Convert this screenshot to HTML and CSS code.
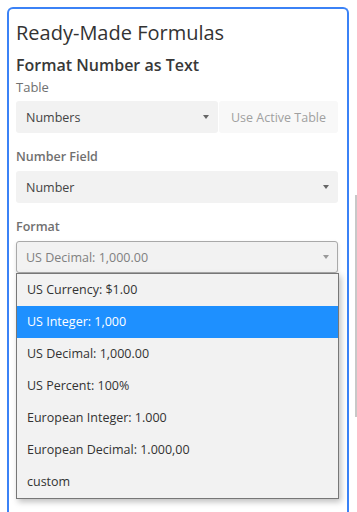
FILE: index.html
```html
<!DOCTYPE html>
<html lang="en">
<head>
  <meta charset="UTF-8" />
  <title>Ready-Made Formulas</title>
  <link rel="stylesheet" href="styles.css">
</head>
<body>
  <div class="scrollbar"></div>
  <div class="card">
    <h1>Ready-Made Formulas</h1>
    <h2>Format Number as Text</h2>

    <label class="field-label">Table</label>
    <div class="row">
      <div class="select grow">
        <span>Numbers</span>
        <span class="caret"></span>
      </div>
      <button class="btn-ghost">Use Active Table</button>
    </div>

    <label class="field-label spaced">Number Field</label>
    <div class="select">
      <span>Number</span>
      <span class="caret"></span>
    </div>

    <label class="field-label spaced">Format</label>
    <div class="dropdown">
      <div class="select open">
        <span>US Decimal: 1,000.00</span>
        <span class="caret"></span>
      </div>
      <ul class="options">
        <li>US Currency: $1.00</li>
        <li class="selected">US Integer: 1,000</li>
        <li>US Decimal: 1,000.00</li>
        <li>US Percent: 100%</li>
        <li>European Integer: 1.000</li>
        <li>European Decimal: 1.000,00</li>
        <li>custom</li>
      </ul>
    </div>
  </div>
</body>
</html>
```

FILE: styles.css
```css
body, html {
  margin: 0;
  padding: 0;
  font-family: "Open Sans", "Noto Sans", sans-serif;
  background-color: #fff;
  color: #333;
  overflow: hidden;
}

body {
  padding: 7px 0 0 7px;
  width: 357px;
  height: 512px;
  box-sizing: border-box;
  position: relative;
}

.scrollbar {
  position: absolute;
  right: 0;
  top: 195px;
  width: 2px;
  height: 222px;
  background-color: #c8c8c8;
}

.card {
  width: 342px;
  height: 505px;
  box-sizing: border-box;
  border: 2px solid #3b82f6;
  border-bottom: none;
  border-radius: 6px 6px 0 0;
  padding: 10px 9px 0 7px;
}

h1 {
  margin: 0;
  font-size: 20px;
  font-weight: 400;
  line-height: 28px;
  color: #333;
}

h2 {
  margin: 7px 0 0;
  font-size: 16px;
  font-weight: 600;
  line-height: 22px;
  color: #383838;
}

.field-label {
  display: block;
  font-size: 13px;
  color: #707070;
  line-height: 18px;
  margin: 2px 0 5px;
}

.field-label.spaced {
  margin: 15px 0 5px;
  font-size: 12.5px;
  font-weight: 600;
  color: #707070;
}

.row {
  display: flex;
  gap: 1px;
}

.grow {
  flex: 1;
}

.select {
  display: flex;
  align-items: center;
  justify-content: space-between;
  height: 32px;
  box-sizing: border-box;
  padding: 0 9px 0 10px;
  background-color: #f2f2f2;
  border-radius: 3px;
  font-size: 12.5px;
  color: #444;
}

.caret {
  width: 0;
  height: 0;
  border-left: 3.5px solid transparent;
  border-right: 3.5px solid transparent;
  border-top: 4px solid #666;
}

.btn-ghost {
  width: 119px;
  height: 32px;
  border: none;
  border-radius: 3px;
  background-color: #f8f8f8;
  color: #a0a0a0;
  font-family: inherit;
  font-size: 12.5px;
  padding: 0;
}

.dropdown {
  position: relative;
}

.select.open {
  background-color: #f2f2f2;
  border: 1px solid #a9a9a9;
  color: #808080;
  box-shadow: 0 2px 4px rgba(0, 0, 0, 0.12);
  padding-left: 9px;
  padding-right: 8px;
}

.select.open .caret {
  border-top-color: #999;
}

.options {
  position: absolute;
  left: 0;
  top: 32px;
  width: 323px;
  margin: 0;
  padding: 0;
  list-style: none;
  background-color: #f2f2f2;
  border: 1px solid #777;
  box-sizing: border-box;
  box-shadow: 2px 3px 6px rgba(0, 0, 0, 0.25);
}

.options li {
  height: 32px;
  line-height: 32px;
  padding-left: 10px;
  font-size: 12.5px;
  color: #333;
}

.options li.selected {
  background-color: #1e90ff;
  color: #fff;
}
```
